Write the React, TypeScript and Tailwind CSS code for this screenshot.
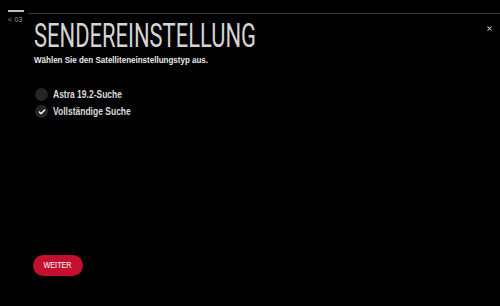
import { Check, X } from "lucide-react";

const options = [
  { label: "Astra 19.2-Suche", checked: false },
  { label: "Vollständige Suche", checked: true },
];

export default function App() {
  return (
    <div className="w-[500px] h-[306px] bg-black overflow-hidden flex flex-col font-['Liberation_Sans',sans-serif] text-[#e6e6e6]">
      <div className="flex pt-[10px]">
        <div className="w-[28px] pl-[8px] flex flex-col">
          <div className="w-[16px] h-[2px] bg-[#bdbdbd]" />
          <div className="mt-[4px] text-[7px] leading-[8px] text-[#9a9a9a] tracking-[0.2px]">&lt; 03</div>
        </div>
        <div className="flex-1 pt-[3px]">
          <div className="h-px bg-[#3a3a3a]" />
        </div>
      </div>

      <div className="flex items-start pl-[34px] pr-[7px]">
        <div className="flex-1 flex flex-col">
          <h1 className="mt-[-2px] text-[34px] leading-[26px] font-normal text-[#d4d4d4] font-['Roboto',sans-serif] origin-left scale-x-[0.645] whitespace-nowrap">
            SENDEREINSTELLUNG
          </h1>
          <p className="mt-[6px] text-[9px] leading-[12px] font-bold text-[#e8e8e8] origin-left scale-x-[0.89] whitespace-nowrap">
            Wählen Sie den Satelliteneinstellungstyp aus.
          </p>
        </div>
        <X className="mt-[1px] w-[7px] h-[7px] text-[#cfcfcf]" strokeWidth={3.5} />
      </div>

      <div className="mt-[22px] pl-[35px] flex flex-col gap-[4px]">
        {options.map((o) => (
          <div key={o.label} className="flex items-center gap-[5px] h-[13px]">
            <div className="w-[13px] h-[13px] rounded-full bg-[#262626] flex items-center justify-center shrink-0">
              {o.checked && <Check className="w-[8px] h-[8px] text-white" strokeWidth={4} />}
            </div>
            <span className="text-[10px] font-bold text-[#dcdcdc] origin-left scale-x-[0.85] whitespace-nowrap">{o.label}</span>
          </div>
        ))}
      </div>

      <div className="mt-auto mb-[30px] pl-[33px]">
        <button className="w-[50px] h-[21px] rounded-full bg-[#c4102f] text-white flex items-center justify-center">
          <span className="text-[8.5px] scale-x-[0.85]">WEITER</span>
        </button>
      </div>
    </div>
  );
}
